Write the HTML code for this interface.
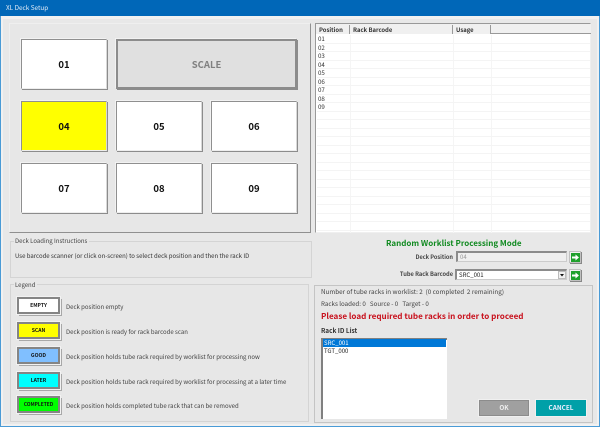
<!DOCTYPE html>
<html><head><meta charset="utf-8">
<style>
html,body{margin:0;padding:0}
body{width:600px;height:427px;position:relative;overflow:hidden;background:#e8e8e8;font-family:"Noto Sans CJK JP","Liberation Sans",sans-serif;font-size:6px;color:#333}
div{position:absolute;box-sizing:border-box;white-space:nowrap}
.panel{background:#e7e7e7;border:1px solid #d6d6d6}
.btn{background:#fff;border:1px solid;border-color:#8f8f8f #d8d8d8 #eeeeee #8f8f8f;box-shadow:1px 1px 0 #8c8c8c,-1px -1px 0 #f2f2f2;font-weight:bold;font-size:9.5px;color:#111;display:flex;align-items:center;justify-content:center}
.lg{left:17px;width:43px;height:17px;border:2px solid #858585;outline:1px solid #f2f2f2;box-shadow:2px 2px 0 #a8a8a8;font-weight:bold;font-size:5.1px;color:#111;display:flex;align-items:center;justify-content:center}
.t{left:66px;line-height:8px;color:#444}
.rw{left:317px;width:273px;height:1px;background:#f4f4f4}
.cl{top:35px;width:1px;height:198px;background:#f5f5f5}
.p{left:318px;line-height:8px;color:#333;font-size:6.2px}
.h{top:25px;height:9px;line-height:9px;font-weight:bold;color:#333;font-size:5.9px;padding-left:3px;background:#f0f0f0;border-right:1px solid #999}
.go{width:12px;height:12px;background:#f2f2f2;border:1px solid #c0c0c0;box-shadow:1px 1px 0 #888}
.go svg{position:absolute;left:1px;top:1px}
</style></head><body>
<div style="left:0;top:0;width:600px;height:427px;border:1px solid #4a9bd6;border-top:0"></div>
<div style="left:1px;top:16px;width:598px;height:410px;border:2px solid #f1f1f1;border-top:3px solid #f1f1f1"></div>
<div style="left:0;top:0;width:600px;height:16px;background:#0067b8"></div>
<div style="left:6px;top:3px;line-height:10px;color:#dfeaf6;font-size:6.4px">XL Deck Setup</div>

<div class="panel" style="left:9px;top:23px;width:302px;height:210px;border-color:#efefef;border-right:1px solid #909090;border-bottom:1px solid #909090"></div>
<div class="btn" style="left:21px;top:39px;width:86px;height:50px">01</div>
<div class="btn" style="left:116px;top:39px;width:181px;height:50px;background:#e0e0e0;color:#808080;border:2px solid #8c8c8c;font-size:9.5px">SCALE</div>
<div class="btn" style="left:21px;top:101px;width:86px;height:50px;background:#ff0">04</div>
<div class="btn" style="left:116px;top:101px;width:86px;height:50px">05</div>
<div class="btn" style="left:211px;top:101px;width:86px;height:50px">06</div>
<div class="btn" style="left:21px;top:163px;width:86px;height:50px">07</div>
<div class="btn" style="left:116px;top:163px;width:86px;height:50px">08</div>
<div class="btn" style="left:211px;top:163px;width:86px;height:50px">09</div>

<div style="left:315px;top:23px;width:276px;height:210px;background:#fff;border:1px solid #999;border-right:1px solid #efefef;border-bottom:1px solid #efefef"></div>
<div style="left:316px;top:24px;width:275px;height:10px;background:#f0f0f0;border-bottom:1px solid #999"></div>
<div class="h" style="left:316px;width:34px">Position</div>
<div class="h" style="left:350px;width:103px">Rack Barcode</div>
<div class="h" style="left:453px;width:38px">Usage</div>
<div class="cl" style="left:350px"></div><div class="cl" style="left:453px"></div><div class="cl" style="left:491px"></div>
<div class="rw" style="top:43px"></div><div class="rw" style="top:51px"></div><div class="rw" style="top:60px"></div><div class="rw" style="top:68px"></div><div class="rw" style="top:77px"></div><div class="rw" style="top:85px"></div><div class="rw" style="top:94px"></div><div class="rw" style="top:102px"></div><div class="rw" style="top:111px"></div><div class="rw" style="top:119px"></div><div class="rw" style="top:128px"></div><div class="rw" style="top:136px"></div><div class="rw" style="top:145px"></div><div class="rw" style="top:153px"></div><div class="rw" style="top:162px"></div><div class="rw" style="top:170px"></div><div class="rw" style="top:179px"></div><div class="rw" style="top:187px"></div><div class="rw" style="top:196px"></div><div class="rw" style="top:204px"></div><div class="rw" style="top:213px"></div><div class="rw" style="top:221px"></div><div class="rw" style="top:230px"></div>
<div class="p" style="top:35px">01</div><div class="p" style="top:44px">02</div><div class="p" style="top:52px">03</div><div class="p" style="top:61px">04</div><div class="p" style="top:69px">05</div><div class="p" style="top:78px">06</div><div class="p" style="top:86px">07</div><div class="p" style="top:95px">08</div><div class="p" style="top:103px">09</div>

<div class="panel" style="left:10px;top:241px;width:302px;height:37px;border-color:#d4d4d4"></div>
<div style="left:14px;top:237px;line-height:8px;background:#e8e8e8;padding:0 2px 0 1px;color:#444">Deck Loading Instructions</div>
<div style="left:15px;top:252px;line-height:8px;color:#333">Use barcode scanner (or click on-screen) to select deck position and then the rack ID</div>

<div class="panel" style="left:10px;top:284px;width:299px;height:138px;border-color:#d4d4d4"></div>
<div style="left:14px;top:281px;line-height:8px;background:#e8e8e8;padding:0 2px 0 1px;color:#444">Legend</div>
<div class="lg" style="top:297px;background:#fff">EMPTY</div><div class="t" style="top:303px">Deck position empty</div>
<div class="lg" style="top:322px;background:#ff0">SCAN</div><div class="t" style="top:328px">Deck position is ready for rack barcode scan</div>
<div class="lg" style="top:347px;background:#80bfff">GOOD</div><div class="t" style="top:353px">Deck position holds tube rack required by worklist for processing now</div>
<div class="lg" style="top:372px;background:#0ff">LATER</div><div class="t" style="top:378px">Deck position holds tube rack required by worklist for processing at a later time</div>
<div class="lg" style="top:396px;background:#0f0;font-size:4.9px">COMPLETED</div><div class="t" style="top:402px">Deck position holds completed tube rack that can be removed</div>

<div style="left:386px;top:238px;line-height:11px;font-size:8px;font-weight:bold;color:#108a20">Random Worklist Processing Mode</div>
<div style="left:380px;width:73px;top:253px;line-height:8px;text-align:right;color:#444;font-weight:bold;font-size:5.6px">Deck Position</div>
<div style="left:456px;top:251px;width:111px;height:11px;background:#efefef;border:1px solid #ccc;border-top:2px solid #8c8c8c;border-left:2px solid #8c8c8c;color:#999;line-height:8px;padding-left:2px">04</div>
<div class="go" style="left:569px;top:251px"><svg width="9" height="9" viewBox="0 0 9 9"><rect width="9" height="9" fill="#1fa02c"/><path d="M1 3.5H4.5V1.5L8 4.5L4.5 7.5V5.5H1Z" fill="#fff"/></svg></div>
<div style="left:380px;width:73px;top:270px;line-height:8px;text-align:right;color:#444;font-weight:bold;font-size:5.7px">Tube Rack Barcode</div>
<div style="left:455px;top:269px;width:112px;height:11px;background:#fff;border:1px solid #ccc;border-top:2px solid #8c8c8c;border-left:2px solid #8c8c8c;color:#222;line-height:8px;padding-left:2px">SRC_001</div>
<div style="left:558px;top:271px;width:8px;height:8px;background:#f0f0f0;border:1px solid #bbb"><svg width="6" height="6" viewBox="0 0 6 6" style="position:absolute;left:0;top:0"><path d="M1 2H5L3 4.5Z" fill="#111"/></svg></div>
<div class="go" style="left:569px;top:269px"><svg width="9" height="9" viewBox="0 0 9 9"><rect width="9" height="9" fill="#1fa02c"/><path d="M1 3.5H4.5V1.5L8 4.5L4.5 7.5V5.5H1Z" fill="#fff"/></svg></div>

<div class="panel" style="left:314px;top:285px;width:279px;height:138px;border-color:#c4c4c4"></div>
<div style="left:321px;top:288px;line-height:8px;color:#444;font-size:6.3px">Number of tube racks in worklist: 2&nbsp; (0 completed&nbsp; 2 remaining)</div>
<div style="left:321px;top:300px;line-height:8px;color:#444;font-size:6.2px">Racks loaded: 0&nbsp;&nbsp; Source - 0&nbsp;&nbsp; Target - 0</div>
<div style="left:321px;top:311px;line-height:12px;font-size:8.1px;font-weight:bold;color:#c8101c">Please load required tube racks in order to proceed</div>
<div style="left:321px;top:327px;line-height:8px;font-weight:bold;font-size:6.4px;color:#333">Rack ID List</div>
<div style="left:321px;top:338px;width:126px;height:81px;background:#fff;border-top:2px solid #808080;border-left:2px solid #808080"></div>
<div style="left:323px;top:339px;width:123px;height:8px;background:#0078d7;color:#fff;line-height:8px;padding-left:1px">SRC_001</div>
<div style="left:323px;top:347px;line-height:8px;color:#222;padding-left:1px">TGT_000</div>
<div style="left:479px;top:400px;width:50px;height:16px;background:#a0a0a0;border:1px solid #8c8c8c;outline:1px solid #f0f0f0;color:#eee;font-weight:bold;font-size:6.4px;text-align:center;line-height:14px">OK</div>
<div style="left:536px;top:400px;width:50px;height:16px;background:#00a0a8;outline:1px solid #f0f0f0;color:#eef;font-weight:bold;font-size:6.4px;text-align:center;line-height:15px">CANCEL</div>
</body></html>
